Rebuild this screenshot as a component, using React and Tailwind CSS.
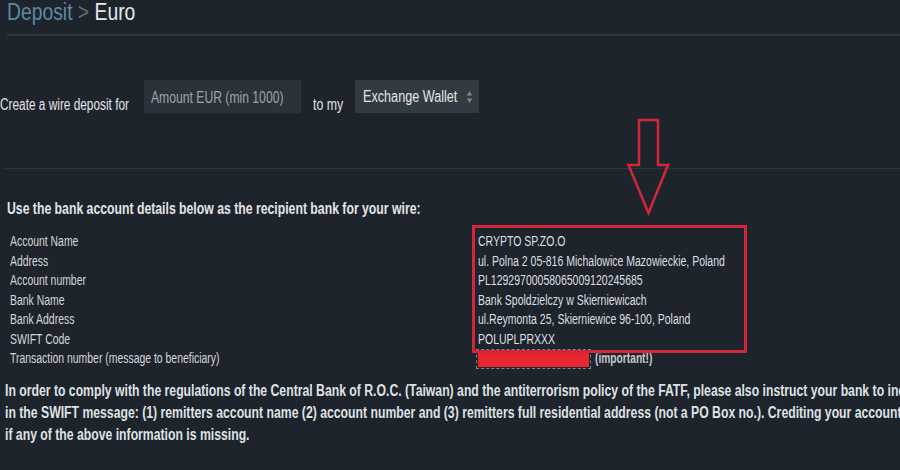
import React from "react";

const rows = [
  ["Account Name", "CRYPTO SP.ZO.O"],
  ["Address", "ul. Polna 2 05-816 Michalowice Mazowieckie, Poland"],
  ["Account number", "PL12929700058065009120245685"],
  ["Bank Name", "Bank Spoldzielczy w Skierniewicach"],
  ["Bank Address", "ul.Reymonta 25, Skierniewice 96-100, Poland"],
  ["SWIFT Code", "POLUPLPRXXX"],
];

function S({ c, children }) {
  return <span className={"inline-block origin-left whitespace-nowrap " + c}>{children}</span>;
}

export default function App() {
  return (
    <div className="relative w-[900px] h-[470px] overflow-hidden bg-[#1e242c] text-[#d4d7db] font-['Liberation_Sans',Arial,sans-serif]">
      <div className="pl-[7px] pt-[1px] h-[34px] text-[23px] leading-[23px]">
        <S c="scale-x-[0.84]">
          <span className="text-[#5d88a5]">Deposit</span>
          <span className="text-[#656b73]"> &gt; </span>
          <span className="text-[#e6e8ea]">Euro</span>
        </S>
      </div>
      <div className="ml-[7px] h-[2px] bg-[#2d3640]" />

      <div className="flex items-start h-[34px] mt-[44px] text-[16px] leading-[16px]">
        <span className="w-[144px] pt-[17px] text-[#e2e4e6]">
          <S c="scale-x-[0.74]">Create a wire deposit for</S>
        </span>
        <div className="w-[157px] h-[33px] bg-[#2b323a] pl-[7px] pt-[10px] text-[#9ea3a9]">
          <S c="scale-x-[0.76]">Amount EUR (min 1000)</S>
        </div>
        <span className="ml-[12px] w-[42px] pt-[17px] text-[#e2e4e6]">
          <S c="scale-x-[0.77]">to my</S>
        </span>
        <div className="w-[124px] h-[33px] bg-[#323a42] pl-[8px] pr-[7px] flex items-start text-[#e4e6e8]">
          <span className="flex-1 min-w-0 pt-[9px]">
            <S c="scale-x-[0.79]">Exchange Wallet</S>
          </span>
          <svg className="mt-[11px] shrink-0" width="5" height="12" viewBox="0 0 5 12">
            <path d="M2.5 0 L5 4.5 L0 4.5 Z M0 7.5 L5 7.5 L2.5 12 Z" fill="#858b92" />
          </svg>
        </div>
      </div>

      <div className="ml-[5px] mt-[54px] h-[1px] bg-[#2d3640]" />

      <div className="mt-[32px] pl-[7px] text-[16px] font-bold text-[#e3e5e8] leading-[16px]">
        <S c="scale-x-[0.765]">Use the bank account details below as the recipient bank for your wire:</S>
      </div>

      <div className="mt-[15px] text-[14px] leading-[19.5px]">
        {rows.map(([k, v]) => (
          <div key={k} className="flex h-[19.5px]">
            <span className="w-[478px] pl-[10px]">
              <S c="scale-x-[0.745]">{k}</S>
            </span>
            <span className="text-[#dcdfe2]">
              <S c="scale-x-[0.75]">{v}</S>
            </span>
          </div>
        ))}
        <div className="flex h-[19.5px] items-center">
          <span className="w-[478px] pl-[10px]">
            <S c="scale-x-[0.745]">Transaction number (message to beneficiary)</S>
          </span>
          <span className="w-[111px] h-[16px] mt-[1px] bg-[#e8262f] outline outline-1 outline-dashed outline-offset-1 outline-[#7d838a]" />
          <span className="ml-[6px] font-bold text-[#c6c9ce]">
            <S c="scale-x-[0.73]">(important!)</S>
          </span>
        </div>
      </div>

      <div className="mt-[11px] pl-[5px] text-[16px] leading-[22.3px] font-bold text-[#dfe2e5]">
        <div>
          <S c="scale-x-[0.764]">In order to comply with the regulations of the Central Bank of R.O.C. (Taiwan) and the antiterrorism policy of the FATF, please also instruct your bank to include the following details</S>
        </div>
        <div>
          <S c="scale-x-[0.764]">in the SWIFT message: (1) remitters account name (2) account number and (3) remitters full residential address (not a PO Box no.). Crediting your account may be delayed</S>
        </div>
        <div>
          <S c="scale-x-[0.764]">if any of the above information is missing.</S>
        </div>
      </div>

      <div className="absolute left-[472px] top-[225px] w-[275px] h-[128px] border-[3px] border-[#d3263a]" />
      <svg className="absolute left-[626px] top-[118px]" width="45" height="99" viewBox="0 0 45 99">
        <path
          d="M13 2 H32 V47 H42 L22.5 95 L2.5 47 H13 Z"
          fill="none"
          stroke="#d3263a"
          strokeWidth="2.5"
        />
      </svg>
    </div>
  );
}
